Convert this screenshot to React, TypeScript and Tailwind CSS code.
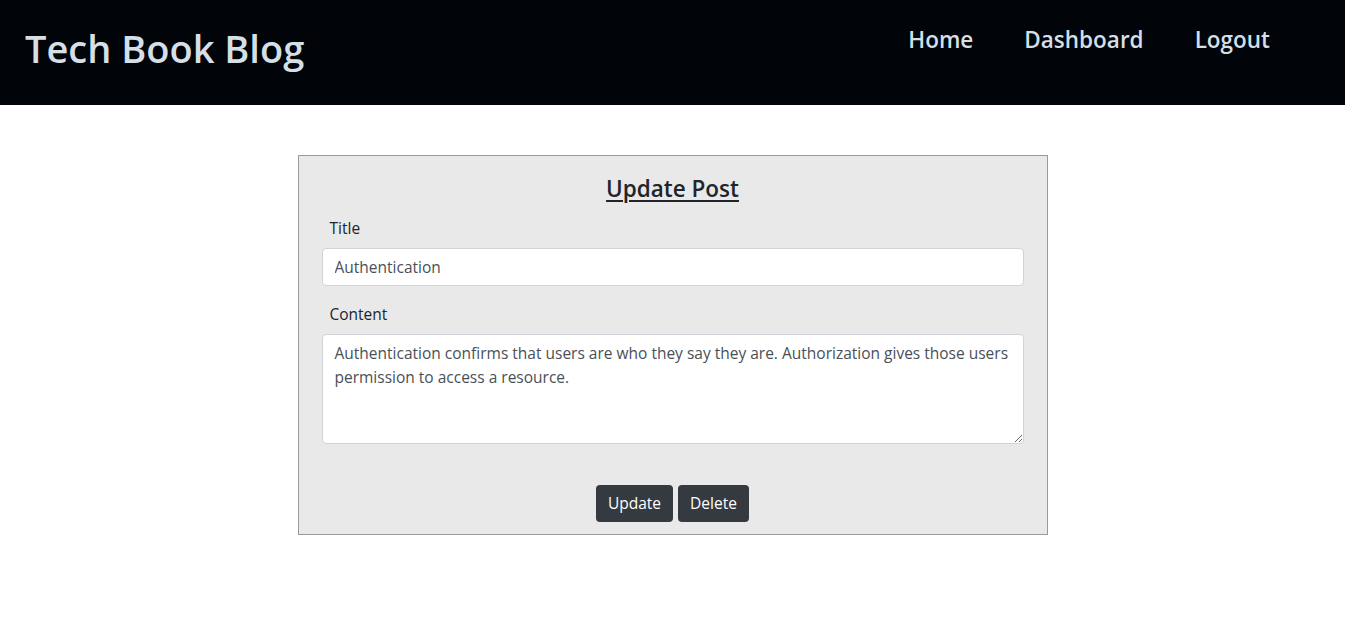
import React from "react";

const font = { fontFamily: '"Segoe UI", "Open Sans", "Noto Sans", sans-serif' };

export default function App() {
  return (
    <div className="min-h-[619px] bg-white text-[#212529]" style={font}>
      <header className="flex h-[105px] items-start justify-between bg-[#010409] text-[#d4dfe6]">
        <h1 className="ml-[25px] mt-[23px] text-[38px] font-semibold leading-[50px]">Tech Book Blog</h1>
        <nav className="mr-[75px] mt-[24px] flex gap-[51px] text-[22.5px] font-semibold leading-[32px]">
          <a href="#">Home</a>
          <a href="#">Dashboard</a>
          <a href="#">Logout</a>
        </nav>
      </header>

      <main className="flex justify-center pt-[50px]">
        <form className="w-[750px] border border-[#9a9a9a] bg-[#e9e9e9] px-[23px] pb-[12px] pt-[18px] text-[15.5px]">
          <h2 className="text-center text-[22.5px] font-semibold leading-[29px] underline decoration-[1.5px] underline-offset-[3px]">
            Update Post
          </h2>

          <label className="mt-[13px] block pl-[8px] leading-[24px]">Title</label>
          <input
            className="mt-[8px] block h-[38px] w-full rounded-[4px] border border-[#ced4da] bg-white px-[12px] text-[#495057] outline-none"
            defaultValue="Authentication"
          />

          <label className="mt-[16px] block pl-[8px] leading-[24px]">Content</label>
          <textarea
            className="mt-[8px] block h-[110px] w-full rounded-[4px] border border-[#ced4da] bg-white px-[12px] py-[6px] leading-[24px] text-[#495057] outline-none"
            defaultValue="Authentication confirms that users are who they say they are. Authorization gives those users permission to access a resource."
          />

          <div className="mt-[41px] flex justify-center gap-[5px]">
            <button type="button" className="h-[37px] w-[77px] rounded-[4px] bg-[#343a40] text-white">
              Update
            </button>
            <button type="button" className="h-[37px] w-[71px] rounded-[4px] bg-[#343a40] text-white">
              Delete
            </button>
          </div>
        </form>
      </main>
    </div>
  );
}
